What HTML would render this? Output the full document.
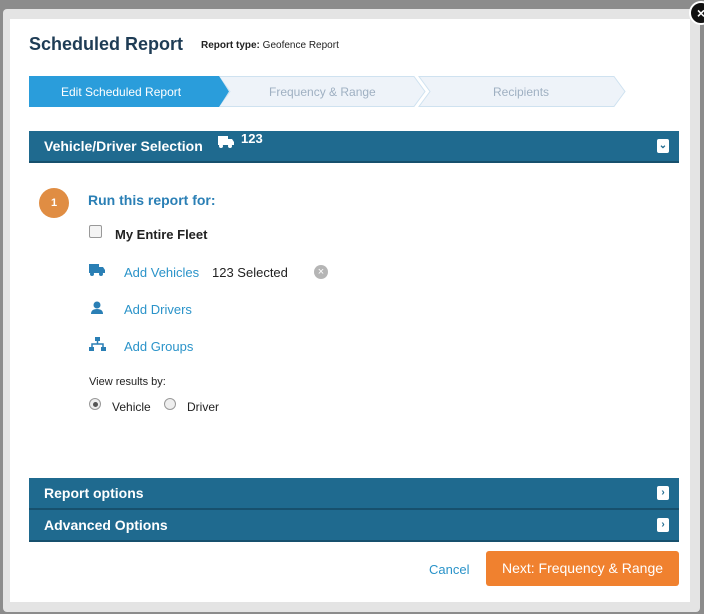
<!DOCTYPE html>
<html><head><style>
body{margin:0;width:704px;height:614px;background:#8c8c8c;font-family:"Liberation Sans",sans-serif;position:relative;overflow:hidden}
.frame{position:absolute;left:3px;top:9px;width:697px;height:603px;background:#e4e4e4;border-radius:4px}
.modal{position:absolute;left:10px;top:19px;width:680px;height:583px;background:#fff}
.a{position:absolute}
.bar{position:absolute;left:29px;width:650px;background:#1f6a8f;color:#fff;font-weight:bold;font-size:14px;box-sizing:border-box;padding-left:15px;border-bottom:2px solid #17506d}
.chev{position:absolute;right:10px;width:12px;height:14px;background:#fff;border-radius:2px;color:#1f6a8f;font-size:10px;text-align:center;line-height:14px}
.lnk{color:#2a93c9;font-size:13px}
</style></head><body>
<div class="frame"></div>
<div class="modal"></div>
<div class="a" style="left:689px;top:1px;width:20px;height:20px;border-radius:50%;background:#111;border:2px solid #fff;color:#fff;font-weight:bold;font-size:14px;line-height:20px;text-align:center">×</div>
<div class="a" style="left:29px;top:34px;font-size:18px;font-weight:bold;color:#1e3c55">Scheduled Report</div>
<div class="a" style="left:201px;top:40px;font-size:10px;color:#222"><b>Report type:</b> Geofence Report</div>
<svg class="a" style="left:29px;top:76px" width="600" height="32">
<polygon points="390,0.5 585,0.5 596,15.5 585,30.5 390,30.5 401,15.5" fill="#eef3f9" stroke="#cfe2f0"/>
<polygon points="190,0.5 385,0.5 396,15.5 385,30.5 190,30.5 201,15.5" fill="#eef3f9" stroke="#cfe2f0"/>
<polygon points="0,0 190,0 200,15.5 190,31 0,31" fill="#2a9ddb"/>
<text x="32" y="20" font-size="12" fill="#fff" font-family="Liberation Sans">Edit Scheduled Report</text>
<text x="240" y="20" font-size="12" fill="#9fb0c2" font-family="Liberation Sans">Frequency &amp; Range</text>
<text x="464" y="20" font-size="12" fill="#9fb0c2" font-family="Liberation Sans">Recipients</text>
</svg>
<div class="bar" style="top:131px;height:32px;line-height:30px">Vehicle/Driver Selection
<svg class="a" style="left:189px;top:5px" width="16" height="12"><rect x="0" y="0" width="10" height="9" fill="#fff"/><polygon points="10,3 14,3 16,6 16,9 10,9" fill="#fff"/><circle cx="3" cy="10" r="2" fill="#fff"/><circle cx="12" cy="10" r="2" fill="#fff"/></svg>
<span class="a" style="left:212px;top:-7px;font-size:13px">123</span>
<div class="chev" style="top:8px">&#8964;</div></div>
<div class="a" style="left:39px;top:188px;width:30px;height:30px;border-radius:50%;background:#e08d43;color:#fff;font-weight:bold;font-size:11px;text-align:center;line-height:30px">1</div>
<div class="a" style="left:88px;top:192px;font-size:14px;font-weight:bold;color:#2a7fb5">Run this report for:</div>
<div class="a" style="left:89px;top:225px;width:11px;height:11px;border:1px solid #999;border-radius:2px;background:#f4f4f4"></div>
<div class="a" style="left:115px;top:227px;font-size:13px;font-weight:bold;color:#222">My Entire Fleet</div>
<svg class="a" style="left:89px;top:264px" width="16" height="12"><rect x="0" y="0" width="10" height="9" fill="#2a7fb5"/><polygon points="10,3 14,3 16,6 16,9 10,9" fill="#2a7fb5"/><circle cx="3" cy="10" r="2" fill="#2a7fb5"/><circle cx="12" cy="10" r="2" fill="#2a7fb5"/></svg>
<div class="a lnk" style="left:124px;top:265px">Add Vehicles</div>
<div class="a" style="left:212px;top:265px;font-size:13px;color:#222">123 Selected</div>
<div class="a" style="left:314px;top:265px;width:14px;height:14px;border-radius:50%;background:#b5b5b5;color:#fff;font-size:11px;text-align:center;line-height:14px">×</div>
<svg class="a" style="left:90px;top:301px" width="14" height="13"><circle cx="7" cy="4" r="3.5" fill="#2a7fb5"/><path d="M1 13 Q1 8 7 8 Q13 8 13 13Z" fill="#2a7fb5"/></svg>
<div class="a lnk" style="left:124px;top:302px">Add Drivers</div>
<svg class="a" style="left:89px;top:337px" width="17" height="14"><rect x="6" y="0" width="5" height="4" fill="#2a7fb5"/><path d="M8.5 4V7M3 10V7H14V10" stroke="#2a7fb5" fill="none" stroke-width="1.5"/><rect x="0" y="10" width="5" height="4" fill="#2a7fb5"/><rect x="12" y="10" width="5" height="4" fill="#2a7fb5"/></svg>
<div class="a lnk" style="left:124px;top:339px">Add Groups</div>
<div class="a" style="left:89px;top:376px;font-size:11px;color:#222">View results by:</div>
<div class="a" style="left:89px;top:398px;width:10px;height:10px;border:1px solid #999;border-radius:50%;background:#eee"><div style="margin:2.5px;width:5px;height:5px;border-radius:50%;background:#555"></div></div>
<div class="a" style="left:112px;top:400px;font-size:12px;color:#222">Vehicle</div>
<div class="a" style="left:164px;top:398px;width:10px;height:10px;border:1px solid #999;border-radius:50%;background:#eee"></div>
<div class="a" style="left:187px;top:400px;font-size:12px;color:#222">Driver</div>
<div class="bar" style="top:478px;height:32px;line-height:30px">Report options<div class="chev" style="top:8px">›</div></div>
<div class="bar" style="top:510px;height:32px;line-height:30px">Advanced Options<div class="chev" style="top:8px">›</div></div>
<div class="a lnk" style="left:429px;top:562px;font-size:13px">Cancel</div>
<div class="a" style="left:486px;top:551px;width:193px;height:35px;background:#f0812f;border-radius:3px;color:#fff;font-size:14px;text-align:center;line-height:35px">Next: Frequency &amp; Range</div>
</body></html>
